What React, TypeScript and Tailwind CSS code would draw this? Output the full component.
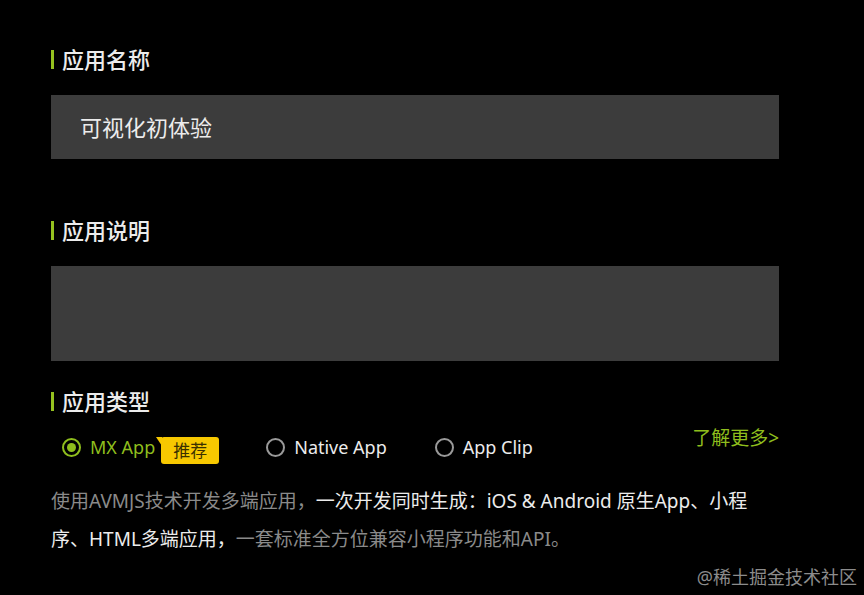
import React from 'react';

const FONT = { fontFamily: '"Noto Sans", "Noto Sans CJK SC", sans-serif' };

function Label({ text }: { text: string }) {
  return (
    <div className="flex items-center h-[26px]">
      <span className="w-[3px] h-[19px] bg-[#95c11f]" />
      <span className="ml-[8px] text-[22px] leading-[26px] font-medium text-[#ececec]">{text}</span>
    </div>
  );
}

function Radio({ label, checked }: { label: string; checked?: boolean }) {
  return (
    <div className="flex items-center">
      <span
        className={`w-[19px] h-[19px] rounded-full border-2 flex items-center justify-center ${
          checked ? 'border-[#8fbe1d]' : 'border-[#9a9a9a]'
        }`}
      >
        {checked && <span className="w-[9px] h-[9px] rounded-full bg-[#8fbe1d]" />}
      </span>
      <span className={`ml-[9px] text-[18px] ${checked ? 'text-[#8fbe1d]' : 'text-[#ececec]'}`}>
        {label}
      </span>
    </div>
  );
}

export default function App() {
  return (
    <div className="w-[864px] h-[595px] bg-black relative overflow-hidden" style={FONT}>
      <div className="pl-[51px] pr-[85px] pt-[46px]">
        <Label text="应用名称" />
        <div className="mt-[23px] h-[64px] bg-[#3c3c3c] flex items-center pl-[29px] text-[22px] text-[#ececec]">
          可视化初体验
        </div>

        <div className="mt-[58px]">
          <Label text="应用说明" />
        </div>
        <div className="mt-[23px] h-[95px] bg-[#3c3c3c]" />

        <div className="mt-[27px]">
          <Label text="应用类型" />
        </div>

        <div className="mt-[23px] h-[20px] flex items-center pl-[11px]">
          <Radio label="MX App" checked />
          <span className="relative ml-[6px] top-[3px] h-[27px] px-[12px] bg-[#f7c800] rounded-[3px] text-[17px] leading-[27px] text-[#3a3000]">
            推荐
            <span className="absolute left-[-5px] top-0 w-0 h-0 border-t-[9px] border-t-[#f7c800] border-l-[6px] border-l-transparent" />
          </span>
          <div className="ml-[47px]">
            <Radio label="Native App" />
          </div>
          <div className="ml-[48px]">
            <Radio label="App Clip" />
          </div>
          <span className="ml-auto text-[19px] text-[#8fbe1d] leading-[20px] relative top-[-9px]">了解更多&gt;</span>
        </div>

        <p className="mt-[25px] text-[19px] leading-[38px] text-[#8a8a8a]">
          使用AVMJS技术开发多端应用，
          <span className="text-[#ececec]">一次开发同时生成：iOS &amp; Android 原生App、小程<br />序、HTML多端应用，</span>
          一套标准全方位兼容小程序功能和API。
        </p>
      </div>

      <div className="absolute right-[7px] bottom-[6px] text-[18px] leading-[24px] text-[#8c8c8c]">@稀土掘金技术社区</div>
    </div>
  );
}
